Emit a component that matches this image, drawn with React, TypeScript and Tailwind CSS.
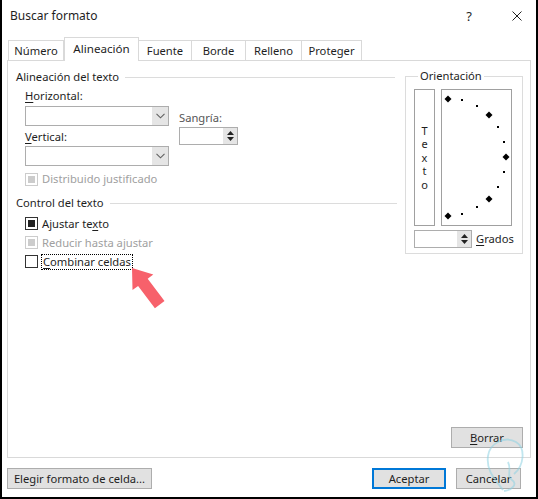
import React from 'react';

const font = { fontFamily: '"Noto Sans", "Open Sans", sans-serif' };

function Chevron() {
    return (
        <svg width="9" height="6" viewBox="0 0 9 6">
            <path d="M0.5 0.8 L4.5 4.8 L8.5 0.8" fill="none" stroke="#606060" strokeWidth="1.1" />
        </svg>
    );
}

function Combo() {
    return (
        <div className="flex h-[20px] w-[144px] border border-[#adadad] bg-white">
            <div className="flex-1" />
            <div className="flex w-[16px] items-center justify-center bg-[#e5e5e5]">
                <Chevron />
            </div>
        </div>
    );
}

function Spinner({ width }: { width: string }) {
    return (
        <div className={`flex h-[18px] border border-[#adadad] bg-white ${width}`}>
            <div className="flex-1" />
            <div className="flex w-[14px] flex-col items-center justify-center gap-[2px] bg-[#e5e5e5]">
                <svg width="7" height="4" viewBox="0 0 7 4"><path d="M3.5 0 L7 4 L0 4 Z" fill="#222" /></svg>
                <svg width="7" height="4" viewBox="0 0 7 4"><path d="M0 0 L7 0 L3.5 4 Z" fill="#222" /></svg>
            </div>
        </div>
    );
}

function Check({ state, disabled }: { state: 'on' | 'off'; disabled?: boolean }) {
    return (
        <div className={`flex h-[13px] w-[13px] shrink-0 items-center justify-center border bg-white ${disabled ? 'border-[#cccccc]' : 'border-[#333333]'}`}>
            {state === 'on' && <div className={`h-[7px] w-[7px] ${disabled ? 'bg-[#cccccc]' : 'bg-[#222222]'}`} />}
        </div>
    );
}

function GroupTitle({ children, lineRight }: { children: React.ReactNode; lineRight: string }) {
    return (
        <div className={`flex h-[16px] items-center ${lineRight}`}>
            <span>{children}</span>
            <div className="ml-[6px] h-px flex-1 bg-[#dcdcdc]" />
        </div>
    );
}

const tabs = [
    { name: 'Número', w: 'w-[56px]' },
    { name: 'Alineación', w: 'w-[75px]' },
    { name: 'Fuente', w: 'w-[53px]' },
    { name: 'Borde', w: 'w-[54px]' },
    { name: 'Relleno', w: 'w-[56px]' },
    { name: 'Proteger', w: 'w-[60px]' },
];

const dots = [
    { x: 448, y: 99, big: true },
    { x: 462, y: 100 },
    { x: 477, y: 106 },
    { x: 489, y: 115, big: true },
    { x: 498, y: 127 },
    { x: 504, y: 142 },
    { x: 506, y: 157, big: true },
    { x: 504, y: 172 },
    { x: 498, y: 187 },
    { x: 489, y: 199, big: true },
    { x: 477, y: 207 },
    { x: 462, y: 214 },
    { x: 448, y: 216, big: true },
];

export default function App() {
    return (
        <div className="relative h-[499px] w-[538px] overflow-hidden border-x-2 border-b-2 border-black bg-white text-[11.2px] leading-[16px] text-[#1e1e1e]" style={font}>
            {/* title bar */}
            <div className="flex h-[32px] items-center pl-[8px] pr-[14px]">
                <span className="flex-1 text-[12px]">Buscar formato</span>
                <span className="mr-[40px] text-[13px]">?</span>
                <svg width="10" height="10" viewBox="0 0 10 10">
                    <path d="M0.5 0.5 L9.5 9.5 M9.5 0.5 L0.5 9.5" stroke="#222" strokeWidth="1" />
                </svg>
            </div>

            {/* tabs */}
            <div className="mt-[5px] flex h-[23px] items-end pl-[6px]">
                {tabs.map((t) => {
                    const active = t.name === 'Alineación';
                    return (
                        <div
                            key={t.name}
                            className={`${t.w} flex items-center justify-center border-[#d9d9d9] bg-white ${
                                active ? 'relative z-10 -mb-px h-[24px] border-x border-t pb-[2px] text-[11.6px]' : 'h-[20px] border-t border-r first:border-l'
                            }`}
                        >
                            {t.name}
                        </div>
                    );
                })}
            </div>

            {/* panel */}
            <div className="mx-[5px] flex h-[398px] flex-col border border-[#d9d9d9] bg-white">
                <div className="flex pl-[8px] pt-[8px]">
                    <div className="w-[389px]">
                        <GroupTitle lineRight="pr-[10px]">Alineación del texto</GroupTitle>
                        <div className="pl-[9px]">
                            <div className="mt-[3px] h-[16px]">
                                <span className="underline underline-offset-2">H</span>orizontal:
                            </div>
                            <div className="mt-[2px] flex">
                                <div>
                                    <Combo />
                                    <div className="mt-[3px] h-[16px]">
                                        <span className="underline underline-offset-2">V</span>ertical:
                                    </div>
                                    <div className="mt-[1px]">
                                        <Combo />
                                    </div>
                                </div>
                                <div className="ml-[10px] pt-[4px]">
                                    <div className="h-[16px] text-[#555]">Sangría:</div>
                                    <div className="mt-[1px]">
                                        <Spinner width="w-[59px]" />
                                    </div>
                                </div>
                            </div>
                            <div className="mt-[6px] flex h-[14px] items-center gap-[4px] text-[#a0a0a0]">
                                <Check state="on" disabled />
                                <span>Distribuido justificado</span>
                            </div>
                        </div>

                        <div className="mt-[9px]">
                            <GroupTitle lineRight="pr-[8px]">Control del texto</GroupTitle>
                        </div>
                        <div className="mt-[3px] pl-[9px]">
                            <div className="flex h-[19px] items-center gap-[4px]">
                                <Check state="on" />
                                <span>
                                    Ajustar te<span className="underline underline-offset-2">x</span>to
                                </span>
                            </div>
                            <div className="flex h-[19px] items-center gap-[4px] text-[#a0a0a0]">
                                <Check state="on" disabled />
                                <span>Reducir hasta ajustar</span>
                            </div>
                            <div className="flex h-[19px] items-center gap-[3px]">
                                <Check state="off" />
                                <span className="border border-dotted border-black px-[1px] leading-[14px]">
                                    <span className="underline underline-offset-2">C</span>ombinar celdas
                                </span>
                            </div>
                        </div>
                    </div>

                    {/* orientation */}
                    <fieldset className="-mt-[1px] h-[186px] w-[116px] border border-[#dcdcdc] px-[8px]">
                        <legend className="ml-[4px] px-[2px] leading-[16px]">Orientación</legend>
                        <div className="mt-[5px] flex gap-[6px]">
                            <div className="flex h-[137px] w-[21px] flex-col items-center justify-center border border-[#a0a0a0] text-[11px]">
                                {['T', 'e', 'x', 't', 'o'].map((c, i) => (
                                    <span key={i} className="block h-[13.5px] leading-[13.5px]">
                                        {c}
                                    </span>
                                ))}
                            </div>
                            <div className="h-[137px] w-[71px] border border-[#a0a0a0]" />
                        </div>
                        <div className="mt-[4px] flex items-center gap-[4px]">
                            <Spinner width="w-[58px]" />
                            <span>
                                <span className="underline underline-offset-2">G</span>rados
                            </span>
                        </div>
                    </fieldset>
                </div>

                <div className="mt-auto flex justify-end pb-[9px] pr-[7px]">
                    <div className="flex h-[21px] w-[72px] items-center justify-center border border-[#adadad] bg-[#e1e1e1]">
                        <span>
                            <span className="underline underline-offset-2">B</span>orrar
                        </span>
                    </div>
                </div>
            </div>

            {/* bottom buttons */}
            <div className="mt-[10px] flex pl-[5px] pr-[15px]">
                <div className="flex h-[21px] w-[145px] items-center justify-center border border-[#adadad] bg-[#e1e1e1]">
                    <span>
                        Ele<span className="underline underline-offset-2">g</span>ir formato de celda...
                    </span>
                </div>
                <div className="flex-1" />
                <div className="flex h-[21px] w-[74px] items-center justify-center border-2 border-[#0078d7] bg-[#e1e1e1]">
                    Aceptar
                </div>
                <div className="ml-[10px] flex h-[21px] w-[65px] items-center justify-center border border-[#adadad] bg-[#e1e1e1]">
                    Cancelar
                </div>
            </div>

            {/* dial marks, arrow, watermark */}
            <svg className="pointer-events-none absolute left-[-2px] top-0" width="538" height="499" viewBox="0 0 538 499">
                {dots.map((d, i) =>
                    d.big ? (
                        <path key={i} d={`M${d.x} ${d.y - 3.5} L${d.x + 3.5} ${d.y} L${d.x} ${d.y + 3.5} L${d.x - 3.5} ${d.y} Z`} fill="#000" />
                    ) : (
                        <rect key={i} x={d.x - 1} y={d.y - 1} width="2" height="2" fill="#000" />
                    )
                )}
                <polygon
                    points="132,268 153.3,274.5 147.7,278.7 164.5,301.1 154.9,308.3 138.1,285.9 132.5,290.1"
                    fill="#f7616b"
                />
                <g fill="none" stroke="#8fd3e3" strokeWidth="1.8" opacity="0.55">
                    <path d="M503 490 C 494 478, 486 470, 488 456 C 490 442, 506 436, 516 442 C 526 448, 524 466, 514 474" />
                    <path d="M508 462 C 512 470, 506 476, 512 480 C 518 484, 512 490, 504 491" />
                </g>
            </svg>
        </div>
    );
}
